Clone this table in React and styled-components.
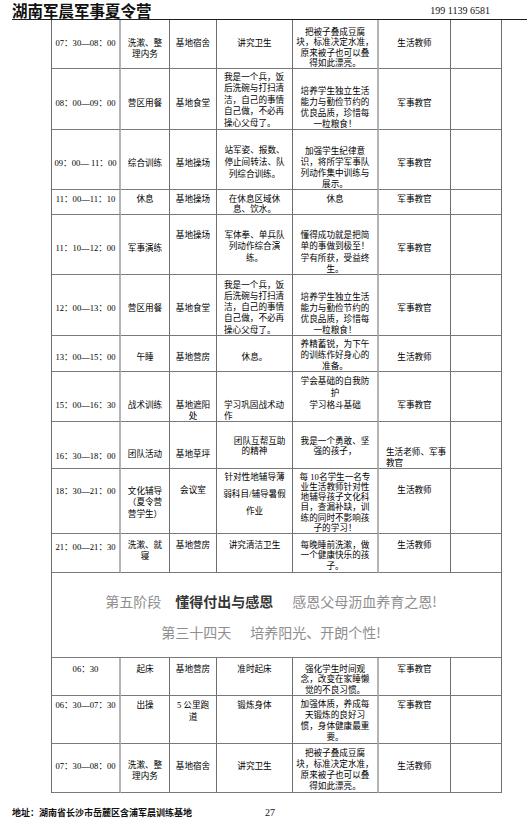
import styled, { createGlobalStyle } from "styled-components"

const GlobalStyle = createGlobalStyle`
  body {
    margin: 0;
    background: #fff;
    font-family: "Noto Sans CJK SC", sans-serif;
    color: #111;
  }
`

const widths = [69, 49, 47, 76, 86, 72, 51]

// y = centre of the first line, measured from the top of the row
const rows = [
  { h: 49, y: 23, cells: ['07：30—08：00', ['洗漱、整', '理内务'], '基地宿舍', '讲究卫生', { t: ['把被子叠成豆腐', '块，标准决定水准，', '原来被子也可以叠', '得如此漂亮。'], y: 12, lh: 10.5 }, '生活教师'] },
  { h: 61, y: 34, cells: ['08：00—09：00', '营区用餐', '基地食堂', { t: ['我是一个兵，饭', '后洗碗与打扫清', '洁，自己的事情', '自己做，不必再', '操心父母了。'], y: 8, lh: 11.5, left: true }, { t: ['培养学生独立生活', '能力与勤俭节约的', '优良品质，珍惜每', '一粒粮食！'], y: 22, lh: 11 }, '军事教官'] },
  { h: 60, y: 33, cells: ['09：00— 11：00', '综合训练', '基地操场', { t: ['站军姿、报数、', '停止间转法、队', '列综合训练。'], y: 20, lh: 12 }, { t: ['加强学生纪律意', '识，将所学军事队', '列动作集中训练与', '展示。'], y: 21, lh: 11 }, '军事教官'] },
  { h: 25, y: 9, cells: ['11：00—11：10', '休息', '基地操场', { t: ['在休息区域休', '息、饮水。'], lh: 10 }, '休息', '军事教官'] },
  { h: 60, y: 33, cells: ['11：10—12：00', '军事演练', { t: '基地操场', y: 20 }, { t: ['军体拳、单兵队', '列动作综合演', '练。'], y: 20, lh: 11.5 }, { t: ['懂得成功就是把简', '单的事做到极至！', '学有所获，受益终', '生。'], y: 20, lh: 11.5 }, '军事教官'] },
  { h: 61, y: 33, cells: ['12：00—13：00', '营区用餐', '基地食堂', { t: ['我是一个兵，饭', '后洗碗与打扫清', '洁，自己的事情', '自己做，不必再', '操心父母了。'], y: 10, lh: 11.3, left: true }, { t: ['培养学生独立生活', '能力与勤俭节约的', '优良品质，珍惜每', '一粒粮食！'], y: 22, lh: 11 }, '军事教官'] },
  { h: 36, y: 21, cells: ['13：00—15：00', '午睡', '基地营房', '休息。', { t: ['养精蓄锐，为下午', '的训练作好身心的', '准备。'], y: 8, lh: 11.2 }, '生活教师'] },
  { h: 50, y: 33, cells: ['15：00—16：30', '战术训练', ['基地遮阳', '处'], { t: ['学习巩固战术动', '作'], left: true }, { t: ['学会基础的自我防', '护', '学习格斗基础'], y: 9, lh: 12 }, '军事教官'] },
  { h: 47, y: 32, cells: [{ t: '16：30—18：00', y: 34 }, '团队活动', '基地草坪', { t: ['\u2003\u2009团队互帮互助', '的精神'], y: 19, lh: 10 }, { t: ['我是一个勇敢、坚', '强的孩子，'], y: 19, lh: 10 }, { t: ['生活老师、军事', '教官'], y: 30.5, left: true }] },
  { h: 65, y: 22, cells: ['18：30—21：00', { t: ['文化辅导', '（夏令营', '营学生）'], lh: 11.5 }, { t: '会议室', y: 21 }, { t: ['针对性地辅导薄', '弱科目/辅导暑假', '作业'], y: 8, lh: 17 }, { t: ['每 10名学生一名专', '业生活教师针对性', '地辅导孩子文化科', '目，查漏补缺，训', '练的同时不影响孩', '子的学习！'], y: 8, lh: 10.3 }, { t: '生活教师', y: 21 }] },
  { h: 39, y: 11, cells: [{ t: '21：00—21：30', y: 13 }, ['洗漱、就', '寝'], '基地营房', '讲究清洁卫生', { t: ['每晚睡前洗漱，做', '一个健康快乐的孩', '子。'], lh: 10.5 }, '生活教师'] },
  { banner: true, h: 85 },
  { h: 38, y: 11, cells: ['06：30', '起床', '基地营房', '准时起床', { t: ['强化学生时间观', '念，改变在家睡懒', '觉的不良习惯。'], lh: 10.5 }, '军事教官'] },
  { h: 48, y: 9, cells: ['06：30—07：30', '出操', { t: ['5 公里跑', '道'], lh: 12 }, '锻炼身体', { t: ['加强体质，养成每', '天锻炼的良好习', '惯，身体健康最重', '要。'], y: 8, lh: 11.2 }, '军事教官'] },
  { h: 49, y: 22, cells: ['07：30—08：00', { t: ['洗漱、整', '理内务'], y: 21 }, '基地宿舍', '讲究卫生', { t: ['把被子叠成豆腐', '块，标准决定水准，', '原来被子也可以叠', '得如此漂亮。'], y: 9, lh: 11 }, '生活教师'] },
]

const toCell = (c, y) => {
  if (typeof c === "string") return { t: [c], y, lh: 11 }
  if (Array.isArray(c)) return { t: c, y, lh: 11 }
  return { y, lh: 11, ...c, t: Array.isArray(c.t) ? c.t : [c.t] }
}

export default function App() {
  return (
    <Page>
      <GlobalStyle />
      <Header>
        <Title>湖南军晨军事夏令营</Title>
        <Phone>199 1139 6581</Phone>
      </Header>

      <Schedule>
        <colgroup>
          {widths.map((w, i) => <Col key={i} $w={w} />)}
        </colgroup>
        <tbody>
          {rows.map((row, r) =>
            row.banner ? (
              <Row key={r} $h={row.h}>
                <BannerCell colSpan={7}>
                  <BannerLine>
                    <Muted>第五阶段</Muted>
                    <Strong>懂得付出与感恩</Strong>
                    <Muted $gap={19}>感恩父母沥血养育之恩!</Muted>
                  </BannerLine>
                  <BannerLine>
                    <Muted>第三十四天</Muted>
                    <Muted $gap={19}>培养阳光、开朗个性!</Muted>
                  </BannerLine>
                </BannerCell>
              </Row>
            ) : (
              <Row key={r} $h={row.h}>
                {[...row.cells, ""].map((raw, i) => {
                  const cell = toCell(raw, row.y)
                  return (
                    <Cell key={i} $y={cell.y} $thick={i === 0 || i === 4} $left={cell.left}>
                      {raw !== "" && (
                        <Lines $lh={cell.lh}>
                          {cell.t.map((line, k) => <Line key={k}>{line}</Line>)}
                        </Lines>
                      )}
                    </Cell>
                  )
                })}
              </Row>
            )
          )}
        </tbody>
      </Schedule>

      <Footer>
        <Address>地址：湖南省长沙市岳麓区含浦军晨训练基地</Address>
        <PageNo>27</PageNo>
      </Footer>
    </Page>
  )
}

const Page = styled.div`
  width: 527px;
`

const Header = styled.header`
  display: flex;
  justify-content: space-between;
  align-items: flex-end;
  height: 19px;
  margin-left: 12px;
  border-bottom: 1px solid #1e1e1e;
`

const Title = styled.h1`
  margin: 2px 0 0;
  font-size: 15.5px;
  line-height: 17px;
  font-weight: 700;
  color: #111;
  align-self: flex-start;
`

const Phone = styled.div`
  font-family: "Liberation Serif", serif;
  font-size: 10px;
  line-height: 10px;
  padding-bottom: 3px;
  margin-right: 37px;
  color: #111;
`

const Schedule = styled.table`
  width: 451px;
  margin-left: 51px;
  table-layout: fixed;
  border-collapse: separate;
  border-spacing: 0;
  border-left: 1px solid #6e6e6e;
`

const Col = styled.col`
  width: ${p => p.$w}px;
`

const Row = styled.tr`
  height: ${p => p.$h}px;
`

const Cell = styled.td`
  box-sizing: border-box;
  vertical-align: top;
  padding: ${p => p.$y - 4.5}px 2px 0 ${p => (p.$left ? 7 : 2)}px;
  border-bottom: 1px solid #7a7a7a;
  border-right: ${p => (p.$thick ? "2px solid #b4b4b4" : "1px solid #6e6e6e")};
  font-family: "Liberation Serif", "Noto Sans CJK SC", serif;
  font-size: 8.6px;
  color: #000;
  text-align: ${p => (p.$left ? "left" : "center")};
`

const Lines = styled.div`
  display: flex;
  flex-direction: column;
  gap: ${p => p.$lh - 9}px;
`

const Line = styled.div`
  height: 9px;
  line-height: 9px;
  white-space: nowrap;
`

const BannerCell = styled.td`
  box-sizing: border-box;
  vertical-align: top;
  padding: 19px 11px 0 0;
  border-bottom: 1px solid #7a7a7a;
  border-right: 1px solid #6e6e6e;
  text-align: center;
`

const BannerLine = styled.div`
  font-family: "Noto Sans CJK SC", sans-serif;
  font-size: 14px;
  line-height: 18px;
  white-space: nowrap;

  & + & {
    margin-top: 13px;
  }
`

const Muted = styled.span`
  color: #8e8e8e;
  margin-left: ${p => p.$gap || 0}px;
`

const Strong = styled.span`
  color: #363636;
  font-weight: 700;
  margin-left: 14px;
`

const Footer = styled.footer`
  display: grid;
  grid-template-columns: 253px auto;
  align-items: center;
  margin-top: 15px;
  padding-left: 12px;
  height: 10px;
`

const Address = styled.div`
  font-size: 9px;
  line-height: 10px;
  font-weight: 700;
  color: #111;
`

const PageNo = styled.div`
  font-family: "Liberation Serif", serif;
  font-size: 10px;
  line-height: 10px;
  color: #111;
`
